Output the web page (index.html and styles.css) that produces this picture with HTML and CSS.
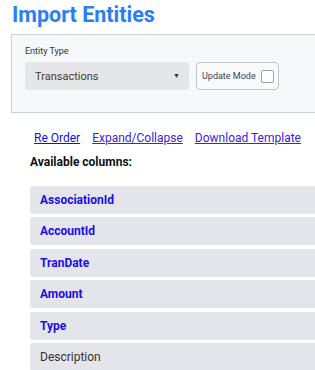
FILE: index.html
```html
<!DOCTYPE html>
<html lang="en">
<head>
    <meta charset="UTF-8">
    <meta name="viewport" content="width=device-width, initial-scale=1.0">
    <title>Import Entities</title>
    <link rel="stylesheet" href="styles.css">
</head>
<body>
    <div class="page">
        <h1 class="page-title">Import Entities</h1>

        <div class="options-panel">
            <label class="field-label">Entity Type</label>
            <div class="options-row">
                <div class="select-box">
                    <span>Transactions</span>
                    <span class="select-arrow">&#9660;</span>
                </div>
                <div class="update-mode">
                    <span>Update Mode</span>
                    <span class="checkbox"></span>
                </div>
            </div>
        </div>

        <div class="links">
            <a href="#" class="link">Re Order</a>
            <a href="#" class="link visited">Expand/Collapse</a>
            <a href="#" class="link visited">Download Template</a>
        </div>

        <h3 class="columns-title">Available columns:</h3>

        <div class="column-list">
            <div class="column-item required">AssociationId</div>
            <div class="column-item required">AccountId</div>
            <div class="column-item required">TranDate</div>
            <div class="column-item required">Amount</div>
            <div class="column-item required">Type</div>
            <div class="column-item">Description</div>
        </div>
    </div>
</body>
</html>
```

FILE: styles.css
```css
body {
    font-family: Roboto, "Open Sans", sans-serif;
    margin: 0;
    padding: 0;
    background: white;
    color: #333;
    overflow: hidden;
}
.page {
    width: 360px;
    padding: 0 0 0 11px;
}
.page-title {
    color: #2b7cf7;
    font-size: 21.5px;
    font-weight: bold;
    margin: 0;
    padding: 2px 0 0 1px;
    height: 32px;
}
.options-panel {
    background-color: #f7f8fa;
    border: 1px solid #c9d1dc;
    height: 77px;
    padding: 0 13px;
}
.field-label {
    display: block;
    font-size: 9px;
    color: #333;
    margin-top: 11px;
    height: 16px;
}
.options-row {
    display: flex;
    gap: 7px;
}
.select-box {
    width: 144px;
    height: 28px;
    background-color: #e4e6ea;
    border-radius: 3px;
    display: flex;
    align-items: center;
    justify-content: space-between;
    padding: 0 10px;
    font-size: 11px;
    color: #4a3b2c;
}
.select-arrow {
    font-size: 7px;
    color: #333;
    margin-right: -1px;
}
.update-mode {
    width: 72px;
    height: 26px;
    border: 1px solid #bfc3c9;
    border-radius: 4px;
    background-color: #f9fafb;
    display: flex;
    align-items: center;
    justify-content: space-between;
    padding: 0 4px 0 5px;
    font-size: 9px;
    color: #3d3f54;
}
.checkbox {
    width: 11px;
    height: 11px;
    border: 1px solid #9aa0a8;
    border-radius: 2px;
    background: white;
}
.links {
    display: flex;
    gap: 12px;
    margin: 18px 0 0 23px;
    font-size: 12px;
}
.link {
    color: #1010ee;
}
.link.visited {
    color: #3b22e0;
}
.columns-title {
    font-size: 12px;
    font-weight: bold;
    color: #111;
    margin: 10px 0 0 19px;
    height: 31px;
}
.column-list {
    margin-left: 19px;
    display: flex;
    flex-direction: column;
    gap: 3.4px;
}
.column-item {
    background-color: #e3e5ea;
    border-radius: 3px;
    height: 28px;
    line-height: 28px;
    padding-left: 10px;
    font-size: 12px;
    color: #333;
}
.column-item.required {
    color: #1a0fe6;
    font-weight: bold;
}
```
